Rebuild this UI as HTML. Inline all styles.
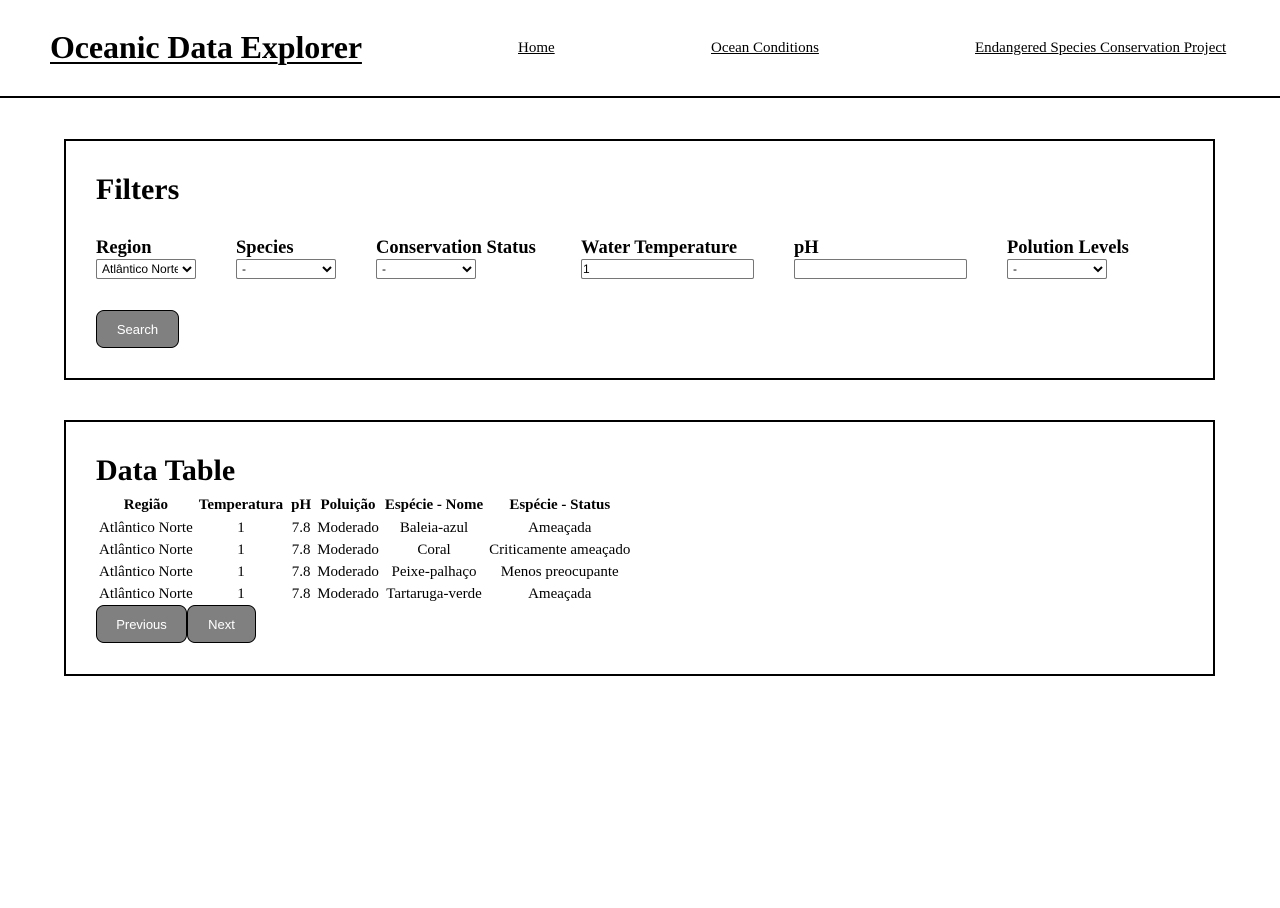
<!DOCTYPE html>
<html><head><meta charset="utf-8"><style>
body{margin:0;font-family:"Liberation Serif",serif;background:#fff;color:#000;}
header{height:96px;border-bottom:2px solid #000;position:relative;}
.logo{position:absolute;left:50px;top:28px;font-size:32px;font-weight:bold;text-decoration:underline;text-decoration-thickness:2px;text-underline-offset:4px;line-height:38px;letter-spacing:-0.1px;}
.nav a{position:absolute;top:40px;font-size:15px;color:#000;text-decoration:underline;}
.card{position:absolute;left:64px;width:1147px;border:2px solid #000;box-sizing:content-box;}
h2{margin:0;font-size:30px;font-weight:bold;position:absolute;left:30px;}
.f{position:absolute;top:96px;}
.f label{display:block;font-weight:bold;font-size:18.5px;line-height:22px;}
select,input{font-family:"Liberation Sans",sans-serif;font-size:12px;height:20px;box-sizing:border-box;border:1px solid #767676;border-radius:2px;padding:0 1px;background:#fff;}
select{width:100px;}
input{width:173px;}
.btn{position:absolute;background:#808080;color:#fff;border:1px solid #000;border-radius:8px;font-family:"Liberation Sans",sans-serif;font-size:13px;height:38px;box-sizing:border-box;}
table{position:absolute;left:30px;top:70px;border-spacing:2px;font-size:15px;}
th{font-weight:bold;padding:1px 3px;height:20px;}
td{text-align:center;padding:1px;height:18px;}
</style></head><body>
<header>
<div class="logo">Oceanic Data Explorer</div>
<div class="nav"><a style="left:518px">Home</a><a style="left:711px">Ocean Conditions</a><a style="left:975px">Endangered Species Conservation Project</a></div>
</header>
<div class="card" style="top:139px;height:237px;">
<h2 style="top:32px">Filters</h2>
<div class="f" style="left:30px"><label>Region</label><select><option>Atlântico Norte</option></select></div>
<div class="f" style="left:170px"><label>Species</label><select><option>-</option></select></div>
<div class="f" style="left:310px"><label>Conservation Status</label><select><option>-</option></select></div>
<div class="f" style="left:515px"><label>Water Temperature</label><input value="1"></div>
<div class="f" style="left:728px"><label>pH</label><input></div>
<div class="f" style="left:941px"><label>Polution Levels</label><select><option>-</option></select></div>
<button class="btn" style="left:30px;top:169px;width:83px">Search</button>
</div>
<div class="card" style="top:420px;height:252px;">
<h2 style="top:32px">Data Table</h2>
<table>
<tr><th>Região</th><th>Temperatura</th><th>pH</th><th>Poluição</th><th>Espécie - Nome</th><th>Espécie - Status</th></tr>
<tr><td>Atlântico Norte</td><td>1</td><td>7.8</td><td>Moderado</td><td>Baleia-azul</td><td>Ameaçada</td></tr>
<tr><td>Atlântico Norte</td><td>1</td><td>7.8</td><td>Moderado</td><td>Coral</td><td>Criticamente ameaçado</td></tr>
<tr><td>Atlântico Norte</td><td>1</td><td>7.8</td><td>Moderado</td><td>Peixe-palhaço</td><td>Menos preocupante</td></tr>
<tr><td>Atlântico Norte</td><td>1</td><td>7.8</td><td>Moderado</td><td>Tartaruga-verde</td><td>Ameaçada</td></tr>
</table>
<button class="btn" style="left:30px;top:183px;width:91px">Previous</button>
<button class="btn" style="left:121px;top:183px;width:69px">Next</button>
</div>
</body></html>
